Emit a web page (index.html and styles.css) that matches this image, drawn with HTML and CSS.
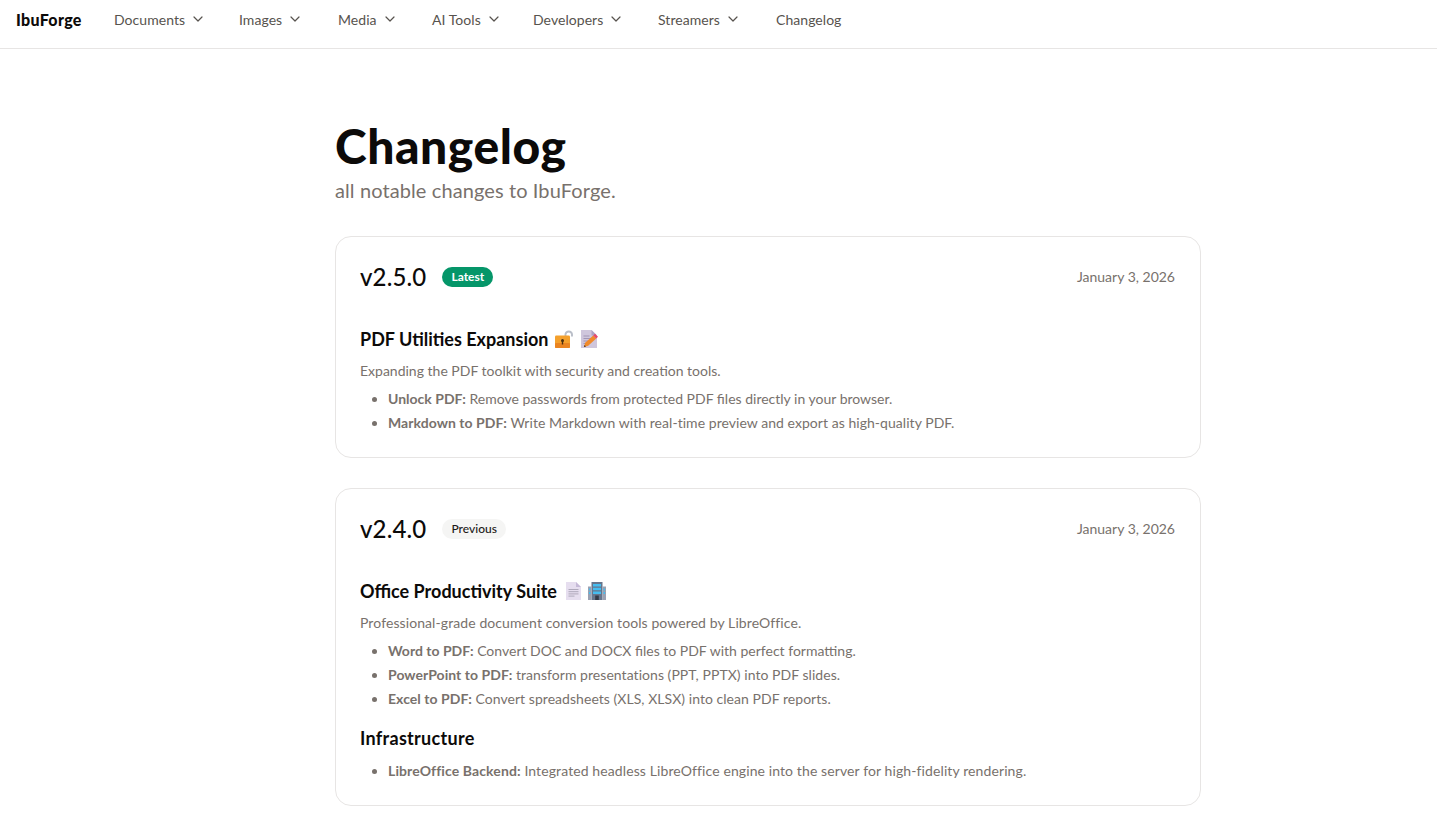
FILE: index.html
```html
<!DOCTYPE html>
<html lang="en">

<head>
    <meta charset="UTF-8">
    <meta name="viewport" content="width=device-width, initial-scale=1.0">
    <title>Changelog - IbuForge</title>
    <link rel="stylesheet" href="styles.css">
</head>

<body>
    <header class="topbar">
        <a class="brand" href="#">IbuForge</a>
        <nav class="nav">
            <a class="nav__item nav__item--w1" href="#">Documents <svg class="chev" viewBox="0 0 10 6"><path d="M1 1l4 4 4-4"/></svg></a>
            <a class="nav__item nav__item--w2" href="#">Images <svg class="chev" viewBox="0 0 10 6"><path d="M1 1l4 4 4-4"/></svg></a>
            <a class="nav__item nav__item--w3" href="#">Media <svg class="chev" viewBox="0 0 10 6"><path d="M1 1l4 4 4-4"/></svg></a>
            <a class="nav__item nav__item--w4" href="#">AI Tools <svg class="chev" viewBox="0 0 10 6"><path d="M1 1l4 4 4-4"/></svg></a>
            <a class="nav__item nav__item--w5" href="#">Developers <svg class="chev" viewBox="0 0 10 6"><path d="M1 1l4 4 4-4"/></svg></a>
            <a class="nav__item nav__item--w6" href="#">Streamers <svg class="chev" viewBox="0 0 10 6"><path d="M1 1l4 4 4-4"/></svg></a>
            <a class="nav__item" href="#">Changelog</a>
        </nav>
    </header>

    <main class="page">
        <h1 class="page__title">Changelog</h1>
        <p class="page__lead">all notable changes to IbuForge.</p>

        <section class="release">
            <div class="release__head">
                <h2 class="release__version">v2.5.0</h2>
                <span class="badge badge--latest">Latest</span>
                <span class="release__date">January 3, 2026</span>
            </div>
            <h3 class="release__heading">PDF Utilities Expansion
                <svg class="emoji" viewBox="0 0 18 18"><path d="M10.500 6V4.200a3.300 3.300 0 0 1 6.500 0V6.500" fill="none" stroke="#b9bec8" stroke-width="1.900"/><rect x="0" y="5.500" width="15" height="12.500" rx="1.200" fill="#f4a02c"/><rect x="0" y="13" width="15" height="5" rx="1" fill="#ea8420"/><circle cx="7.500" cy="10.500" r="1.500" fill="#4a2f10"/><rect x="6.800" y="10.500" width="1.400" height="4" fill="#4a2f10"/></svg>
                <svg class="emoji emoji--next" viewBox="0 0 18 18"><path d="M0 0h10.500L16 5.500V18H0z" fill="#cfc6dc"/><path d="M10.500 0L16 5.500h-5.500z" fill="#aea2c4"/><path d="M2.500 6h6M2.500 8.500h8M2.500 11h5M2.500 13.500h3" stroke="#9c90b0" stroke-width=".9"/><path d="M3 17l1.200-4.200 8-7.300 3 3-8 7.300z" fill="#f08a2c"/><path d="M12.200 5.500l1.800-1.700 3 3-1.800 1.700z" fill="#e8486a"/><path d="M3 17l.5-2 1.500 1.400z" fill="#4a2f10"/></svg>
            </h3>
            <p class="release__text">Expanding the PDF toolkit with security and creation tools.</p>
            <ul class="release__list">
                <li><b>Unlock PDF:</b> Remove passwords from protected PDF files directly in your browser.</li>
                <li class="tracked"><b>Markdown to PDF:</b> Write Markdown with real-time preview and export as high-quality PDF.</li>
            </ul>
        </section>

        <section class="release">
            <div class="release__head">
                <h2 class="release__version">v2.4.0</h2>
                <span class="badge badge--prev">Previous</span>
                <span class="release__date">January 3, 2026</span>
            </div>
            <h3 class="release__heading">Office Productivity Suite
                <svg class="emoji emoji--doc" viewBox="0 0 18 18"><path d="M0 0h10L15 5v13H0z" fill="#e6deef"/><path d="M10 0l5 5h-5z" fill="#c6bad8"/><path d="M2.500 7.500h10M2.500 9.700h10M2.500 11.900h10M2.500 14.100h6" stroke="#a8a3b4" stroke-width=".9"/></svg>
                <svg class="emoji emoji--tower" viewBox="0 0 18 18"><rect x="3.500" y="0" width="11" height="18" fill="#66758c"/><rect x="0" y="4.500" width="3.500" height="13.500" fill="#9aa1b2"/><rect x="14.500" y="4.500" width="3.500" height="13.500" fill="#9aa1b2"/><path d="M5 2h8v2.400H5zM5 5.800h8v2.400H5zM5 9.600h8v2.400H5z" fill="#45bdf0"/><path d="M1 6.500h1.500v2H1zM1 10h1.500v2H1zM15.500 6.500H17v2h-1.500zM15.500 10H17v2h-1.500z" fill="#45bdf0"/><rect x="7.200" y="13.500" width="3.600" height="4.500" fill="#333a48"/></svg>
            </h3>
            <p class="release__text release__text--wide">Professional-grade document conversion tools powered by LibreOffice.</p>
            <ul class="release__list">
                <li><b>Word to PDF:</b> Convert DOC and DOCX files to PDF with perfect formatting.</li>
                <li class="tracked"><b>PowerPoint to PDF:</b> transform presentations (PPT, PPTX) into PDF slides.</li>
                <li class="tracked"><b>Excel to PDF:</b> Convert spreadsheets (XLS, XLSX) into clean PDF reports.</li>
            </ul>
            <h3 class="release__heading release__heading--sub">Infrastructure</h3>
            <ul class="release__list">
                <li class="tracked-wide"><b>LibreOffice Backend:</b> Integrated headless LibreOffice engine into the server for high-fidelity rendering.</li>
            </ul>
        </section>
    </main>
</body>

</html>
```
FILE: styles.css
```css
:root {
    --ink: #0c0a09;
    --muted: #78716c;
    --line: #e7e5e4;
}

html,
body {
    height: 100%;
    overflow: hidden;
}

body {
    background-color: #fff;
    color: var(--ink);
    font-family: Lato, "Noto Sans", sans-serif;
    margin: 0;
}

a {
    color: inherit;
    text-decoration: none;
}

.topbar {
    align-items: center;
    border-bottom: 1px solid var(--line);
    box-sizing: border-box;
    display: flex;
    height: 49px;
    padding-bottom: 10px;
    padding-left: 16px;
}

.brand {
    font-size: 16px;
    font-weight: 900;
    letter-spacing: 0.3px;
    width: 98px;
}

.nav {
    align-items: center;
    display: flex;
}

.nav__item {
    align-items: center;
    color: #57534e;
    display: flex;
    font-size: 14px;
    gap: 8px;
    letter-spacing: 0.05px;
}

.nav__item--w1 { width: 125px; }
.nav__item--w2 { width: 99px; }
.nav__item--w3 { width: 94px; }
.nav__item--w4 { width: 101px; }
.nav__item--w5 { width: 125px; }
.nav__item--w6 { width: 118px; }

.chev {
    fill: none;
    height: 6px;
    stroke: currentColor;
    stroke-linecap: round;
    stroke-linejoin: round;
    stroke-width: 1.2;
    width: 10px;
}

.page {
    margin: 0 auto;
    padding-left: 99px;
    padding-top: 67px;
    width: 866px;
}

.page__title {
    font-size: 48px;
    font-weight: 900;
    letter-spacing: 0.55px;
    line-height: 60px;
    margin: 0;
}

.page__lead {
    color: var(--muted);
    font-size: 20px;
    letter-spacing: 0.1px;
    line-height: 28px;
    margin: 0 0 32px;
}

.release {
    border: 1px solid var(--line);
    border-radius: 16px;
    box-sizing: border-box;
    margin-bottom: 30px;
    padding: 24px 24px 22px;
}

.release__head {
    align-items: center;
    display: flex;
    height: 32px;
    margin-bottom: 32px;
}

.release__version {
    font-size: 24px;
    font-weight: 500;
    letter-spacing: 0.15px;
    line-height: 32px;
    margin: 0 16px 0 0;
}

.badge {
    border-radius: 999px;
    font-size: 12px;
    font-weight: 700;
    line-height: 16px;
    padding: 2px 9px;
}

.badge--latest {
    background-color: #059669;
    color: #fff;
}

.badge--prev {
    background-color: #f5f5f4;
    color: #1c1917;
    font-weight: 500;
}

.release__date {
    color: var(--muted);
    font-size: 14px;
    line-height: 18px;
    margin-left: auto;
    padding-right: 1px;
}

.release__heading {
    align-items: center;
    display: flex;
    font-size: 18px;
    font-weight: 700;
    line-height: 28px;
    margin: 0 0 6px;
}

.release__heading--sub {
    letter-spacing: 0.3px;
    margin: 13px 0 7px;
}

.emoji {
    height: 18px;
    margin-left: 7px;
    width: 18px;
}

.emoji--next {
    margin-left: 8px;
}

.emoji--doc {
    margin-left: 9px;
}

.emoji--tower {
    margin-left: 4px;
}

.release__text {
    color: var(--muted);
    font-size: 14px;
    line-height: 24px;
    margin: 0 0 4px;
}

.release__text--wide {
    letter-spacing: 0.09px;
}

.release__list {
    color: var(--muted);
    font-size: 14px;
    line-height: 24px;
    margin: 0;
    padding-left: 28px;
}

.release__list b {
    font-weight: 700;
}

.tracked {
    letter-spacing: 0.045px;
}

.tracked-wide {
    letter-spacing: 0.105px;
}
```
